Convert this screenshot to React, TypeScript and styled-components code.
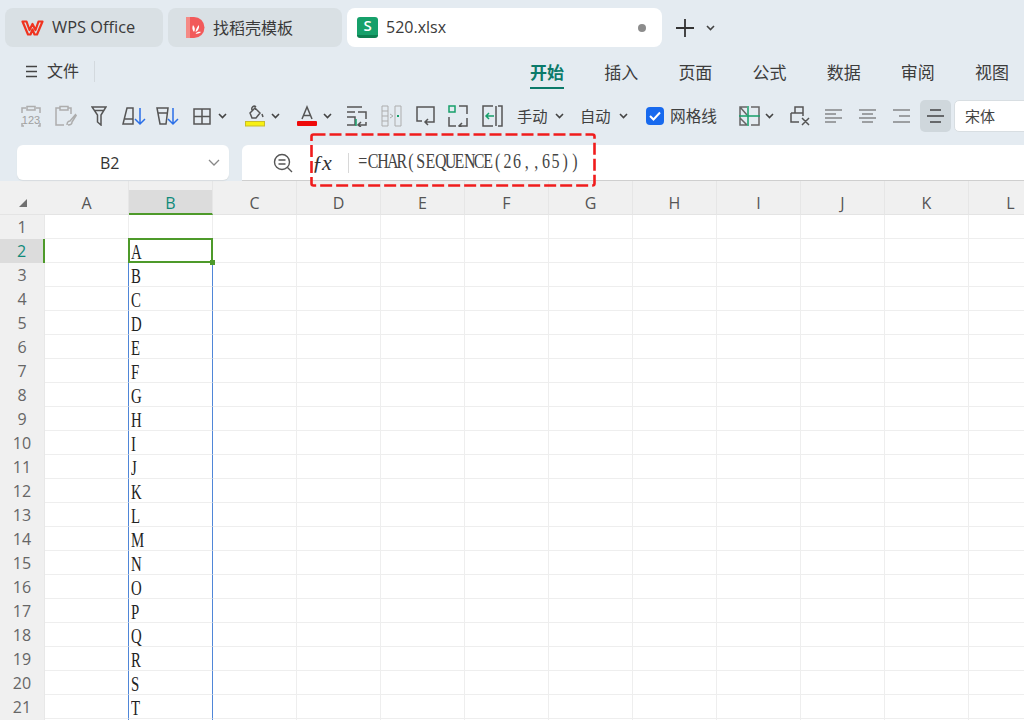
import React from 'react';
import styled, { createGlobalStyle } from 'styled-components';

const Global = createGlobalStyle`
  html, body { margin: 0; padding: 0; width: 1024px; height: 720px; overflow: hidden; background: #e4ebf1; }
  #root { width: 1024px; height: 720px; }
  *, *::before, *::after { box-sizing: border-box; }
`;

const UI = `"Open Sans", "Noto Sans CJK SC", sans-serif`;

const Page = styled.div`
  position: relative;
  width: 1024px;
  height: 720px;
  overflow: hidden;
  display: flex;
  flex-direction: column;
  background: #e4ebf1;
  font-family: ${UI};
  color: #3c3c3c;
`;

/* ---------- title tabs ---------- */
const TabStrip = styled.div`
  display: flex;
  align-items: center;
  gap: 5.5px;
  height: 47px;
  padding: 8px 0 0 5px;
  flex: none;
`;
const Tab = styled.div<{ $w: number; $active?: boolean; $pad: number; $size?: number }>`
  width: ${p => p.$w}px;
  height: 39px;
  border-radius: 8px;
  display: flex;
  align-items: center;
  gap: 8px;
  padding-left: ${p => p.$pad}px;
  padding-right: 16px;
  font-size: ${p => p.$size ?? 16}px;
  background: ${p => (p.$active ? '#ffffff' : '#d9e0e4')};
  color: #3a3a3a;
`;
const TabTitle = styled.span`
  flex: 1;
  padding-bottom: 2px;
`;
const Dot = styled.span`
  width: 8px;
  height: 8px;
  border-radius: 50%;
  background: #8c8c8c;
`;
const SheetLogo = styled.span`
  width: 21px;
  height: 21px;
  border-radius: 3px;
  background: #16a06a;
  border-bottom: 3px solid #0d7f50;
  color: #fff;
  font-size: 15px;
  font-weight: 600;
  line-height: 17px;
  text-align: center;
`;
const NewTab = styled.div`
  display: flex;
  align-items: center;
  gap: 11px;
  margin-left: 7px;
`;

/* ---------- menu row ---------- */
const MenuRow = styled.div`
  display: flex;
  align-items: flex-start;
  justify-content: space-between;
  height: 45px;
  padding: 12px 15px 0 26px;
  flex: none;
`;
const FileMenu = styled.div`
  display: flex;
  align-items: center;
  gap: 10px;
  height: 24px;
  font-size: 16px;
`;
const FileLabel = styled.span`
  padding-bottom: 2px;
`;
const Separator = styled.span`
  width: 1px;
  height: 21px;
  background: #d3d9de;
  margin-left: 5px;
`;
const Ribbon = styled.div`
  display: flex;
  gap: 40.17px;
`;
const RibbonTab = styled.div<{ $active?: boolean }>`
  position: relative;
  width: 34px;
  height: 30px;
  line-height: 28px;
  font-size: 17px;
  white-space: nowrap;
  font-weight: ${p => (p.$active ? 700 : 400)};
  color: ${p => (p.$active ? '#0b7a6a' : '#3c3c3c')};
  border-bottom: ${p => (p.$active ? '2px solid #0b7a6a' : '2px solid transparent')};
`;

/* ---------- toolbar ---------- */
const Toolbar = styled.div`
  display: flex;
  align-items: center;
  height: 53px;
  padding: 8px 0 13px 0;
  flex: none;
`;
const Icon = styled.svg<{ $ml: number }>`
  flex: none;
  margin-left: ${p => p.$ml}px;
  fill: none;
  stroke: #555;
  stroke-width: 1.5;
`;
const FadedIcon = styled(Icon)`
  stroke: #adadad;
`;
const ThinIcon = styled(Icon)`
  stroke-width: 1.2;
`;
const Caret = styled.svg<{ $ml: number }>`
  flex: none;
  margin-left: ${p => p.$ml}px;
  fill: none;
  stroke: #444;
  stroke-width: 1.6;
`;
const ToolText = styled.span<{ $ml: number; $w: number; $size?: number }>`
  flex: none;
  margin-left: ${p => p.$ml}px;
  width: ${p => p.$w}px;
  padding-bottom: 2px;
  font-size: ${p => p.$size ?? 15.3}px;
  white-space: nowrap;
  color: #404040;
`;
const CheckBox = styled.span`
  flex: none;
  margin-left: 18px;
  width: 18px;
  height: 18px;
  border-radius: 4px;
  background: #1769ee;
  display: flex;
  align-items: center;
  justify-content: center;
`;
const ActiveButton = styled.div`
  flex: none;
  margin-left: 10px;
  width: 31px;
  height: 32px;
  border-radius: 5px;
  background: #cfd7dc;
  display: flex;
  align-items: center;
  justify-content: center;
`;
const FontBox = styled.div`
  flex: none;
  margin-left: 3px;
  width: 120px;
  height: 32px;
  padding-left: 10px;
  border-radius: 5px;
  border: 1px solid #d8dee2;
  background: #fff;
  font-size: 15px;
  line-height: 30px;
  color: #444;
`;

/* ---------- formula row ---------- */
const FormulaRow = styled.div`
  display: flex;
  gap: 13px;
  height: 36px;
  padding-left: 17px;
  flex: none;
  align-items: flex-start;
`;
const NameBox = styled.div`
  position: relative;
  width: 212px;
  height: 35px;
  border-radius: 6px;
  background: #fff;
  font-size: 16px;
  line-height: 36px;
  padding-left: 83px;
  color: #333;
  box-shadow: 0 1px 1px #d7dcdf;
`;
const NameCaret = styled.svg`
  position: absolute;
  right: 9px;
  top: 14px;
  fill: none;
  stroke: #888;
  stroke-width: 1.3;
`;
const FormulaBox = styled.div`
  flex: 1;
  height: 36px;
  border-radius: 6px 0 0 0;
  border-bottom: 1px solid #cfcfcf;
  background: #fff;
  display: flex;
  align-items: center;
  padding-left: 31px;
`;
const Fx = styled.span`
  margin-left: 19px;
  width: 23px;
  font-family: "Liberation Serif", serif;
  font-style: italic;
  font-size: 22px;
  letter-spacing: -1px;
  color: #333;
`;
const FormulaDivider = styled.span`
  width: 1px;
  height: 20px;
  background: #d8d8d8;
  margin-left: 13px;
`;
const FormulaText = styled.span`
  margin-left: 9px;
  padding-bottom: 3px;
  display: flex;
  font-family: "Liberation Serif", serif;
  font-size: 20px;
  transform: scaleX(0.8);
  transform-origin: left center;
  white-space: nowrap;
  color: #444;
`;
const FormulaChar = styled.span`
  width: 12.06px;
  text-align: center;
`;

/* ---------- sheet ---------- */
const Sheet = styled.div`
  flex: 1;
  display: grid;
  grid-template-columns: 45px repeat(12, 84px);
  grid-template-rows: 34px;
  grid-auto-rows: 24px;
  background: #fff;
  overflow: hidden;
`;
const Corner = styled.div`
  background: #f0f0f0;
  border-bottom: 1px solid #e4e4e4;
  display: flex;
  align-items: flex-end;
  justify-content: center;
  padding-bottom: 7px;
`;
const ColHead = styled.div<{ $on?: boolean }>`
  background: ${p => (p.$on ? 'linear-gradient(#f0f0f0 9px, #dcdcdc 9px)' : '#f0f0f0')};
  border-bottom: ${p => (p.$on ? '2px solid #4e9a2a' : '1px solid #e4e4e4')};
  border-right: 1px solid #e6e6e6;
  text-align: center;
  font-size: 16px;
  line-height: 16px;
  padding-top: 14px;
  color: ${p => (p.$on ? '#0f8a7a' : '#555')};
`;
const RowHead = styled.div<{ $on?: boolean }>`
  background: ${p => (p.$on ? '#dcdcdc' : '#f0f0f0')};
  border-right: ${p => (p.$on ? '2px solid #4e9a2a' : '1px solid #e8e8e8')};
  text-align: center;
  font-size: 16px;
  line-height: 24px;
  color: ${p => (p.$on ? '#0f8a7a' : '#666')};
`;
const Cell = styled.div<{ $blue?: boolean; $sel?: boolean }>`
  position: relative;
  border-right: 1px solid ${p => (p.$blue ? '#4f86d8' : '#eeeeee')};
  border-bottom: 1px solid #eeeeee;
  &::after {
    content: ${p => (p.$sel ? '""' : 'none')};
    position: absolute;
    left: -1px;
    top: -1px;
    width: 85px;
    height: 25px;
    border: 2px solid #4e9a2a;
  }
  &::before {
    content: ${p => (p.$sel ? '""' : 'none')};
    position: absolute;
    right: -3px;
    bottom: -3px;
    width: 5px;
    height: 5px;
    background: #4e9a2a;
    z-index: 1;
  }
`;
const Letter = styled.span`
  position: absolute;
  left: 2px;
  top: 1px;
  font-family: "Liberation Serif", serif;
  font-size: 20px;
  line-height: 24px;
  color: #222;
  transform: scaleX(0.74);
  transform-origin: left center;
`;
const DashedFrame = styled.svg`
  position: absolute;
  left: 309px;
  top: 132px;
  fill: none;
  stroke: #f01c1c;
  stroke-width: 2.6;
  stroke-dasharray: 12 4;
  pointer-events: none;
`;

const ArrowDown = ({ x }: { x: number }) => (
  <path d={`M${x} 2V18M${x - 5} 13L${x} 18L${x + 5} 13`} stroke="#2a6fe8" />
);

const Chevron = ({ ml }: { ml: number }) => (
  <Caret $ml={ml} width="9" height="6" viewBox="0 0 9 6">
    <path d="M1 1L4.500 4.500L8 1" />
  </Caret>
);

const COLS = 'ABCDEFGHIJKL'.split('');
const TABS = ['开始', '插入', '页面', '公式', '数据', '审阅', '视图'];
const ROWS = Array.from({ length: 22 }, (_, i) => i + 1);
const FORMULA = '=CHAR(SEQUENCE(26,,65))'.split('');

export default function App() {
  return (
    <Page>
      <Global />
      <TabStrip>
        <Tab $w={157.5} $pad={16} $size={16.4}>
          <svg width="23" height="16" viewBox="0 0 23 16" fill="none">
            <path d="M1.500 1.500H5.500L8.500 10L11.500 4L14.500 10L17.500 1.500H21.500L16 14.500H13.500L11.500 9.500L9.500 14.500H7Z" stroke="#f0331f" strokeWidth="2.200" strokeLinejoin="round" />
          </svg>
          <TabTitle>WPS Office</TabTitle>
        </Tab>
        <Tab $w={173.5} $pad={18}>
          <svg width="19" height="21" viewBox="0 0 19 21">
            <path d="M0 2a2 2 0 0 1 2-2h6a10.500 10.500 0 0 1 0 21H2a2 2 0 0 1-2-2Z" fill="#f25a5a" />
            <rect x="0" y="0" width="4" height="21" fill="#f58a85" />
            <path d="M8 15C6 13 6 10 7 8C9 10 9.500 13 8 15ZM9.500 15C10 12 11 10 13 8C13.500 11 12 14 9.500 15ZM9.500 16.500C11 15 13 14.500 15 15C13.500 16.500 11.500 17 9.500 16.500Z" fill="#fff" />
          </svg>
          <TabTitle>找稻壳模板</TabTitle>
        </Tab>
        <Tab $w={315} $pad={10} $active>
          <SheetLogo>S</SheetLogo>
          <TabTitle>520.xlsx</TabTitle>
          <Dot />
        </Tab>
        <NewTab>
          <svg width="20" height="20" viewBox="0 0 20 20" stroke="#333" strokeWidth="1.8">
            <path d="M10 1V19M1 10H19" />
          </svg>
          <Caret $ml={0} width="9" height="6" viewBox="0 0 9 6">
            <path d="M1 1L4.500 4.500L8 1" />
          </Caret>
        </NewTab>
      </TabStrip>

      <MenuRow>
        <FileMenu>
          <svg width="11" height="13" viewBox="0 0 11 13" stroke="#444" strokeWidth="1.4">
            <path d="M0 1.500H11M0 6.500H11M0 11.500H11" />
          </svg>
          <FileLabel>文件</FileLabel>
          <Separator />
        </FileMenu>
        <Ribbon>
          {TABS.map((t, i) => (
            <RibbonTab key={t} $active={i === 0}>{t}</RibbonTab>
          ))}
        </Ribbon>
      </MenuRow>

      <Toolbar>
        {/* paste values */}
        <FadedIcon $ml={21} width="20" height="22" viewBox="0 0 20 22">
          <path d="M5 3H1V8M15 3H19V8M1 18V21H3M19 18V21H17M6 1.500H14V5H6Z" />
          <text x="10" y="19" textAnchor="middle" fontSize="11" fontFamily="Liberation Sans" fill="#a0a0a0" stroke="none">123</text>
        </FadedIcon>
        {/* paste format */}
        <FadedIcon $ml={14} width="22" height="22" viewBox="0 0 22 22">
          <path d="M5 3H1V20H9M13 3H16V9M5 1.500H13V5H5Z" />
          <path d="M12 20C12 17 14 16 15 16L21 9M13 20C15 20 17 19 17 17L21.500 10" />
        </FadedIcon>
        {/* filter */}
        <Icon $ml={14} width="16" height="20" viewBox="0 0 16 20">
          <path d="M1 1H15L10 9V19L6.500 16V9ZM3 4.500H13" />
        </Icon>
        {/* sort ascending */}
        <Icon $ml={15} width="24" height="20" viewBox="0 0 24 20">
          <path d="M5 2H11V18H1ZM3 13H11" />
          <ArrowDown x={18} />
        </Icon>
        {/* sort descending */}
        <Icon $ml={10} width="23" height="20" viewBox="0 0 23 20">
          <path d="M1 2H12L10 18H4ZM2 7H11" />
          <ArrowDown x={17} />
        </Icon>
        {/* borders */}
        <Icon $ml={14} width="18" height="17" viewBox="0 0 18 17">
          <path d="M1 1H17V16H1ZM9 1V16M1 8.500H17" />
        </Icon>
        <Chevron ml={7} />
        {/* fill colour */}
        <Icon $ml={18} width="20" height="22" viewBox="0 0 20 22">
          <path d="M5 8L10 3L15 8L11 13H7ZM7 5C6 2 9 0 11 2M17 9L18 12" />
          <rect x="0.500" y="16.500" width="19" height="4.500" fill="#f7f013" stroke="#c9bd2a" strokeWidth="1" />
        </Icon>
        <Chevron ml={6} />
        {/* font colour */}
        <Icon $ml={17} width="20" height="22" viewBox="0 0 20 22">
          <path d="M5 14L10 2L15 14M6.500 10.500H13.500" />
          <rect x="0" y="16" width="20" height="5" fill="#ee0a0a" stroke="none" rx="1" />
        </Icon>
        <Chevron ml={6} />
        {/* wrap layout */}
        <Icon $ml={14} width="21" height="22" viewBox="0 0 21 22">
          <path d="M1 2H16M1 7H9M12 7H20V14M1 12H9V20H1M20 17V20H12M15 17L12 20L15 22" />
          <path d="M10 14V21" stroke="#16a06a" />
        </Icon>
        {/* merge */}
        <FadedIcon $ml={14} width="21" height="22" viewBox="0 0 21 22">
          <path d="M1 1H7V21H1ZM1 6H7M1 11H7M1 16H7M14 1H20V21H14ZM9 9L12 11L9 13" strokeWidth="1" />
          <path d="M17 10V12" stroke="#16a06a" strokeWidth="2" />
        </FadedIcon>
        {/* wrap */}
        <Icon $ml={14} width="19" height="20" viewBox="0 0 19 20">
          <path d="M6 15H1V1H18V16H9M12 13L9 16L12 19" />
        </Icon>
        {/* cell split */}
        <Icon $ml={13} width="20" height="22" viewBox="0 0 20 22">
          <rect x="1" y="1" width="6" height="6" stroke="#16a06a" />
          <path d="M11 1H19V9M1 12V21H8M19 13V21H11M14 18L11 21L14 23" />
        </Icon>
        {/* freeze arrow */}
        <Icon $ml={14} width="21" height="22" viewBox="0 0 21 22">
          <path d="M11 1H1V21H11M16 1H20V21H16M14 1V21" />
          <path d="M12 11H4M7 8L4 11L7 14" stroke="#16a06a" />
        </Icon>
        <ToolText $ml={14} $w={31}>手动</ToolText>
        <Chevron ml={7} />
        <ToolText $ml={16} $w={31}>自动</ToolText>
        <Chevron ml={8} />
        <CheckBox>
          <svg width="12" height="10" viewBox="0 0 12 10" fill="none" stroke="#fff" strokeWidth="2">
            <path d="M1 5L4.500 8.500L11 1.500" />
          </svg>
        </CheckBox>
        <ToolText $ml={6} $w={47} $size={15.7}>网格线</ToolText>
        {/* freeze panes */}
        <Icon $ml={22} width="21" height="20" viewBox="0 0 21 20">
          <path d="M8 1H1V19H8M12 1H20V19H12M1 1L8 9M1 12L8 19" stroke="#666" />
          <path d="M9 0V20M0 10H21" stroke="#16a06a" />
        </Icon>
        <Chevron ml={5} />
        {/* clear format */}
        <Icon $ml={16} width="20" height="20" viewBox="0 0 20 20">
          <path d="M1 7H5V1H13V7M1 7V16H9M5 7H13V10M12 12L19 19M19 12L12 19" />
        </Icon>
        {/* align */}
        <ThinIcon $ml={15} width="17" height="14" viewBox="0 0 17 14">
          <path d="M0 1H17M0 5H11M0 9H17M0 13H11" />
        </ThinIcon>
        <ThinIcon $ml={17} width="17" height="14" viewBox="0 0 17 14">
          <path d="M0 1H17M3 5H14M0 9H17M3 13H14" />
        </ThinIcon>
        <ThinIcon $ml={17} width="17" height="14" viewBox="0 0 17 14">
          <path d="M0 1H17M6 7H17M0 13H17" />
        </ThinIcon>
        <ActiveButton>
          <svg width="17" height="14" viewBox="0 0 17 14" fill="none" stroke="#444" strokeWidth="1.3">
            <path d="M3 1H14M0 7H17M3 13H14" />
          </svg>
        </ActiveButton>
        <FontBox>宋体</FontBox>
      </Toolbar>

      <FormulaRow>
        <NameBox>
          B2
          <NameCaret width="12" height="7" viewBox="0 0 12 7">
            <path d="M1 1L6 6L11 1" />
          </NameCaret>
        </NameBox>
        <FormulaBox>
          <svg width="20" height="20" viewBox="0 0 20 20" fill="none" stroke="#555" strokeWidth="1.4">
            <circle cx="9" cy="9" r="7.500" />
            <path d="M5.500 7H12.500M5.500 11H12.500M14.500 14.500L19 19" />
          </svg>
          <Fx>ƒx</Fx>
          <FormulaDivider />
          <FormulaText>
            {FORMULA.map((ch, i) => (
              <FormulaChar key={i}>{ch}</FormulaChar>
            ))}
          </FormulaText>
        </FormulaBox>
      </FormulaRow>

      <Sheet>
        <Corner>
          <svg width="8" height="8" viewBox="0 0 8 8">
            <path d="M8 0V8H0Z" fill="#707070" />
          </svg>
        </Corner>
        {COLS.map(c => (
          <ColHead key={c} $on={c === 'B'}>{c}</ColHead>
        ))}
        {ROWS.map(r => {
          const letter = r >= 2 && r <= 21 ? String.fromCharCode(63 + r) : '';
          return (
            <React.Fragment key={r}>
              <RowHead $on={r === 2}>{r <= 21 ? r : ''}</RowHead>
              {COLS.map(c => (
                <Cell
                  key={c}
                  $blue={r >= 2 && (c === 'A' || c === 'B')}
                  $sel={r === 2 && c === 'B'}
                >
                  {c === 'B' && letter ? <Letter>{letter}</Letter> : null}
                </Cell>
              ))}
            </React.Fragment>
          );
        })}
      </Sheet>

      <DashedFrame width="288" height="56" viewBox="0 0 288 56">
        <rect x="2.500" y="2.500" width="283" height="51" rx="2" />
      </DashedFrame>
    </Page>
  );
}
